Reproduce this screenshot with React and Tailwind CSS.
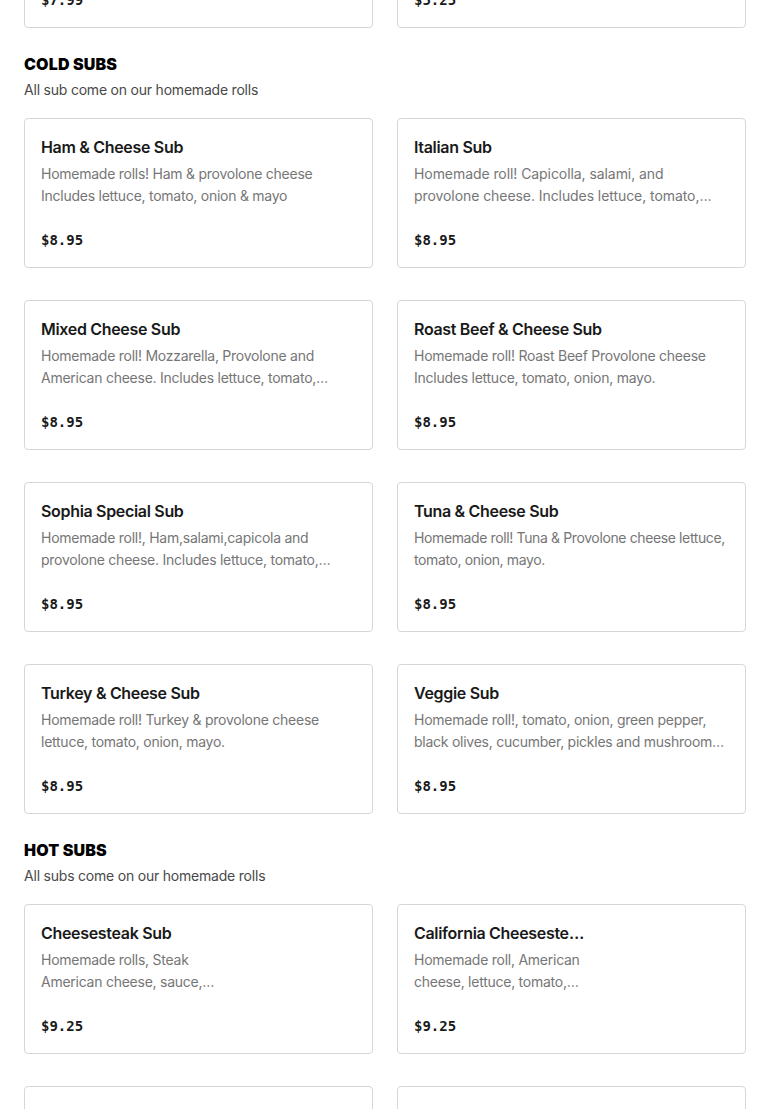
import React from 'react';

const coldSubs = [
  { name: 'Ham & Cheese Sub', desc: 'Homemade rolls! Ham & provolone cheese Includes lettuce, tomato, onion & mayo', price: '$8.95' },
  { name: 'Italian Sub', desc: 'Homemade roll! Capicolla, salami, and provolone cheese. Includes lettuce, tomato, onion, mayo.', price: '$8.95', track: 'tracking-[-0.005em]' },
  { name: 'Mixed Cheese Sub', desc: 'Homemade roll! Mozzarella, Provolone and American cheese. Includes lettuce, tomato, onion, mayo.', price: '$8.95' },
  { name: 'Roast Beef & Cheese Sub', desc: 'Homemade roll! Roast Beef Provolone cheese Includes lettuce, tomato, onion, mayo.', price: '$8.95' },
  { name: 'Sophia Special Sub', desc: 'Homemade roll!, Ham,salami,capicola and provolone cheese. Includes lettuce, tomato, onion, mayo.', price: '$8.95' },
  { name: 'Tuna & Cheese Sub', desc: 'Homemade roll! Tuna & Provolone cheese lettuce, tomato, onion, mayo.', price: '$8.95', track: 'tracking-[-0.027em]' },
  { name: 'Turkey & Cheese Sub', desc: 'Homemade roll! Turkey & provolone cheese lettuce, tomato, onion, mayo.', price: '$8.95' },
  { name: 'Veggie Sub', desc: 'Homemade roll!, tomato, onion, green pepper, black olives, cucumber, pickles and mushrooms, lettuce, mayo.', price: '$8.95' },
];

const hotSubs = [
  { name: 'Cheesesteak Sub', desc: 'Homemade rolls, Steak American cheese, sauce, onions, peppers and mushrooms.', price: '$9.25', image: true },
  { name: 'California Cheesesteak Sub', desc: 'Homemade roll, American cheese, lettuce, tomato, onion, mayo.', price: '$9.25', image: true },
];

const sans = { fontFamily: 'Inter, "Liberation Sans", sans-serif' };
const mono = { fontFamily: '"DejaVu Sans Mono", "Liberation Mono", monospace' };

const ItemCard = ({ item, faded }) => (
  <div
    className="h-[150px] border border-[#d6d6d6] rounded-[4px] bg-white pt-4 pb-[17px] px-4 flex gap-4"
    style={sans}
  >
    <div className={item.image ? 'w-[176px] flex flex-col min-w-0' : 'flex-1 flex flex-col min-w-0'}>
      <div className={`text-[16px] leading-6 font-semibold tracking-[-0.02em] truncate ${faded ? 'text-[#f3f3f3]' : 'text-[#191919]'}`}>
        {item.name}
      </div>
      <p
        className={`mt-1 text-[14px] leading-[22px] line-clamp-2 ${item.track || 'tracking-[-0.018em]'} ${
          faded ? 'text-[#f6f6f6]' : 'text-[#767676]'
        }`}
      >
        {item.desc}
      </p>
      <div className={`mt-auto text-[14px] leading-5 font-bold ${faded ? 'text-[#f3f3f3]' : 'text-[#191919]'}`} style={mono}>
        {item.price}
      </div>
    </div>
    {item.image && <div className="flex-1" />}
  </div>
);

const Section = ({ title, subtitle, items }) => (
  <section className="mt-6">
    <h2 className="text-[16px] leading-6 font-black tracking-[0.01em] text-black uppercase" style={sans}>
      {title}
    </h2>
    <p className="mt-[4px] text-[14px] leading-5 tracking-[-0.015em] text-[#494949]" style={sans}>
      {subtitle}
    </p>
    <div className="mt-[18px] grid grid-cols-2 gap-x-6 gap-y-8">
      {items.map((item, i) => (
        <ItemCard key={i} item={item} faded={item.faded} />
      ))}
    </div>
  </section>
);

export default function App() {
  const prevRow = [
    { name: 'Chicken Salad Sub', desc: 'Homemade roll! Chicken salad, lettuce, tomato, onion.', price: '$7.99' },
    { name: 'Side of Fries', desc: 'Crispy golden french fries.', price: '$5.25' },
  ];

  const hotItems = [
    ...hotSubs,
    { name: 'Chicken Parm Sub', desc: 'Homemade roll, chicken, marinara and mozzarella.', price: '$9.25', faded: true },
    { name: 'Meatball Parm Sub', desc: 'Homemade roll, meatballs, marinara and mozzarella.', price: '$9.25', faded: true },
  ];

  return (
    <div className="w-[770px] h-[1109px] overflow-hidden bg-white">
      <div className="px-6 -mt-[122px]">
        <div className="grid grid-cols-2 gap-x-6">
          {prevRow.map((item, i) => (
            <ItemCard key={i} item={item} />
          ))}
        </div>
        <Section title="Cold Subs" subtitle="All sub come on our homemade rolls" items={coldSubs} />
        <Section title="Hot Subs" subtitle="All subs come on our homemade rolls" items={hotItems} />
      </div>
    </div>
  );
}
